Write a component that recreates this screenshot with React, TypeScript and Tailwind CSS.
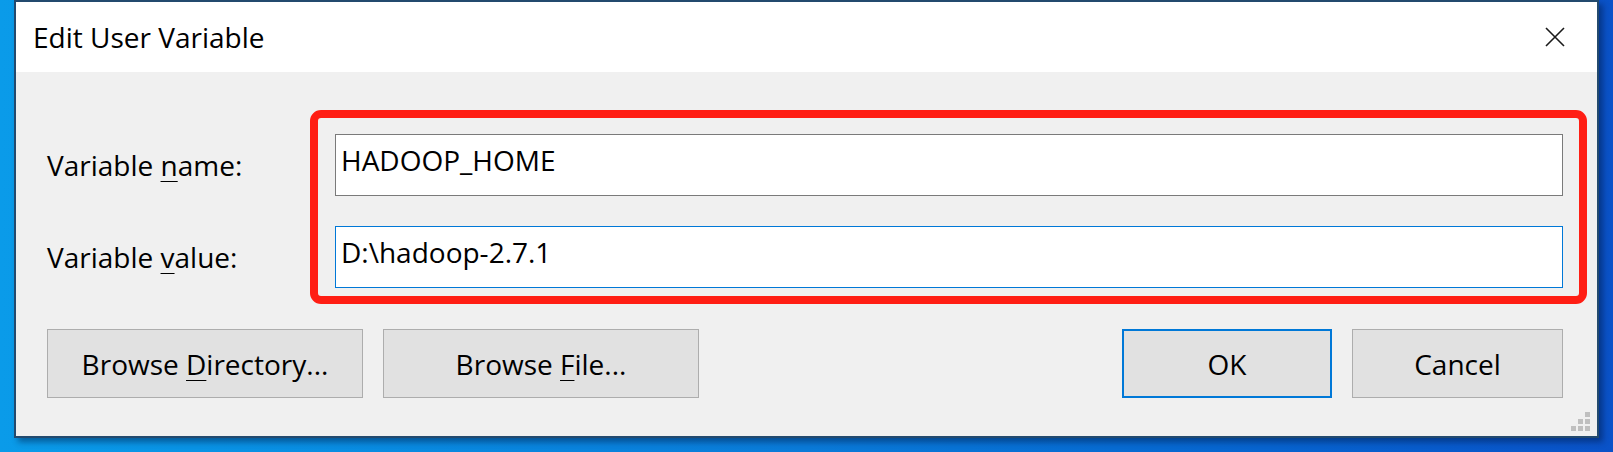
import React from "react";

const font = { fontFamily: '"Open Sans", "Noto Sans", Arial, sans-serif' };

function Mnemonic({ children }: { children: React.ReactNode }) {
    return <span className="underline decoration-1 underline-offset-[5px]">{children}</span>;
}

function Field({ value, focused = false }: { value: string; focused?: boolean }) {
    return (
        <div
            className={
                focused
                    ? "h-[62px] bg-white border border-[#0078d7] px-[5px] pt-[5px] text-[28px] leading-[40px] text-black"
                    : "h-[62px] bg-white border border-[#7a7a7a] px-[5px] pt-[5px] text-[28px] leading-[40px] text-black"
            }>
            {value}
        </div>
    );
}

function Button({ children, primary = false, width }: { children: React.ReactNode; primary?: boolean; width: string }) {
    return (
        <div
            className={
                (primary
                    ? "border-2 border-[#0078d7] "
                    : "border border-[#adadad] ") +
                width +
                " h-[69px] bg-[#e1e1e1] flex items-center justify-center text-[28px] text-black"
            }>
            {children}
        </div>
    );
}

export default function App() {
    return (
        <div
            style={font}
            className="w-[1613px] h-[452px] overflow-hidden bg-gradient-to-r from-[#0a9be9] via-[#0a7ad8] to-[#0a52c8]">
            <div className="relative ml-[14px] w-[1585px] h-[438px] border-2 border-[#234a6e] bg-[#f0f0f0] flex flex-col shadow-[4px_4px_6px_rgba(0,20,60,0.45)]">
                {/* title bar */}
                <div className="h-[70px] bg-white flex items-center justify-between pl-[17px] pr-[32px]">
                    <span className="text-[28px] text-black">Edit User Variable</span>
                    <svg width="20" height="20" viewBox="0 0 20 20" fill="none">
                        <path d="M1 1L19 19M19 1L1 19" stroke="#1a1a1a" strokeWidth="1.6" />
                    </svg>
                </div>

                {/* fields */}
                <div className="flex pt-[38px] pl-[31px] pr-[10px]">
                    <div className="w-[263px] flex flex-col gap-[30px] pt-[24px] text-[28px] text-black">
                        <div className="h-[62px] flex items-center">
                            Variable&nbsp;<Mnemonic>n</Mnemonic>ame:
                        </div>
                        <div className="h-[62px] flex items-center">
                            Variable&nbsp;<Mnemonic>v</Mnemonic>alue:
                        </div>
                    </div>

                    <div className="flex-1 h-[194px] border-[8px] border-[#ff1e14] rounded-[11px] pt-[16px] pl-[17px] pr-[16px] flex flex-col gap-[30px]">
                        <Field value="HADOOP_HOME" />
                        <Field value="D:\hadoop-2.7.1" focused />
                    </div>
                </div>

                {/* buttons */}
                <div className="flex justify-between pt-[25px] pl-[31px] pr-[34px]">
                    <div className="flex gap-[20px]">
                        <Button width="w-[316px]">
                            Browse&nbsp;<Mnemonic>D</Mnemonic>irectory...
                        </Button>
                        <Button width="w-[316px]">
                            Browse&nbsp;<Mnemonic>F</Mnemonic>ile...
                        </Button>
                    </div>
                    <div className="flex gap-[20px]">
                        <Button primary width="w-[210px]">OK</Button>
                        <Button width="w-[211px]">Cancel</Button>
                    </div>
                </div>

                {/* size grip */}
                <div className="absolute right-[7px] bottom-[5px] grid grid-cols-3 gap-[2px]">
                    <span className="w-[5px] h-[5px]" />
                    <span className="w-[5px] h-[5px]" />
                    <span className="w-[5px] h-[5px] bg-[#bfbfbf]" />
                    <span className="w-[5px] h-[5px]" />
                    <span className="w-[5px] h-[5px] bg-[#bfbfbf]" />
                    <span className="w-[5px] h-[5px] bg-[#bfbfbf]" />
                    <span className="w-[5px] h-[5px] bg-[#bfbfbf]" />
                    <span className="w-[5px] h-[5px] bg-[#bfbfbf]" />
                    <span className="w-[5px] h-[5px] bg-[#bfbfbf]" />
                </div>
            </div>
        </div>
    );
}
